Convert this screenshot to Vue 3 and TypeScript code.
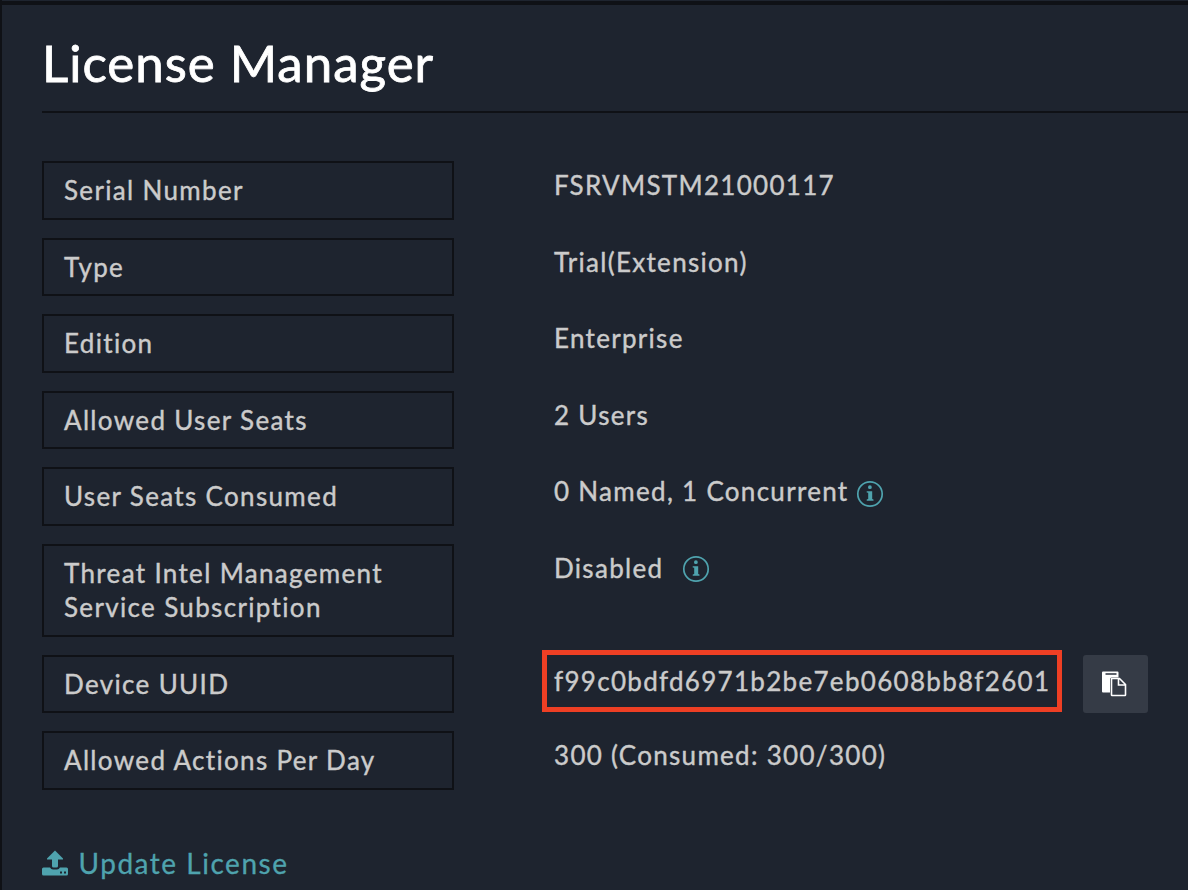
<script setup lang="ts">
interface LicenseRow {
  label: string
  value: string
  info?: 'near' | 'far'
  copy?: boolean
}

const rows: LicenseRow[] = [
  { label: 'Serial Number', value: 'FSRVMSTM21000117' },
  { label: 'Type', value: 'Trial(Extension)' },
  { label: 'Edition', value: 'Enterprise' },
  { label: 'Allowed User Seats', value: '2 Users' },
  { label: 'User Seats Consumed', value: '0 Named, 1 Concurrent', info: 'near' },
  { label: 'Threat Intel Management Service Subscription', value: 'Disabled', info: 'far' },
  { label: 'Device UUID', value: 'f99c0bdfd6971b2be7eb0608bb8f2601', copy: true },
  { label: 'Allowed Actions Per Day', value: '300 (Consumed: 300/300)' },
]
</script>

<template>
  <main class="panel">
    <header class="head">
      <h1>License Manager</h1>
    </header>
    <dl class="rows">
      <div v-for="row in rows" :key="row.label" class="row">
        <dt class="label">{{ row.label }}</dt>
        <dd class="value" :class="{ device: row.copy }">
          <span class="text" :class="{ marked: row.copy }">{{ row.value }}</span>
          <svg v-if="row.info" class="info" :class="row.info" viewBox="0 0 28 28">
            <circle cx="14" cy="14" r="12.2" />
            <path d="M12 7.200a1.900 1.900 0 1 1 3.800 0a1.900 1.900 0 1 1-3.800 0zM10.700 11.200h5.500v7.900l1.300.4v1.200h-6.800v-1.200l1.500-.4v-6.300l-1.500-.4z" />
          </svg>
          <button v-if="row.copy" class="copy" type="button" aria-label="Copy">
            <svg viewBox="0 0 26 26">
              <path class="board" d="M2 .5h14.500q1 0 1 1v5h-7q-1.500 0-1.500 1.500V21.500H2q-1 0-1-1V1.500q0-1 1-1z" />
              <path class="clip" d="M4.500 3h11" />
              <path class="sheet" d="M10.500 7.500H18.500L24.500 13.500V24q0 .5-.5.500H11q-.5 0-.5-.5zM17.500 7.500v6.500h7" />
            </svg>
          </button>
        </dd>
      </div>
    </dl>
    <a class="update">
      <svg viewBox="0 0 26 26">
        <path fill-rule="evenodd" d="M13 .5L21 8.500V9.500H16V16q0 1.500-1.500 1.500h-3Q10 17.500 10 16V9.500H5V8.500zM1.500 17.500H8q1 2 3 2h4q2 0 3-2h6.500q1.500 0 1.500 1.500v5q0 1.500-1.500 1.500h-23Q0 25.500 0 24v-5q0-1.500 1.500-1.500zM18 21.500v2h2v-2zM22 21.500v2h2v-2z" />
      </svg>
      <span>Update License</span>
    </a>
  </main>
</template>

<style>
body {
  margin: 0;
  background: #1e242f;
  overflow: hidden;
}
</style>

<style scoped>
.panel {
  box-sizing: border-box;
  width: 1188px;
  height: 890px;
  overflow: hidden;
  padding-left: 40px;
  border-left: 2px solid #0f1116;
  background: linear-gradient(#1e242f 0 1px, #0f1116 1px 5px, #1e242f 5px);
  color: #cbcbcb;
  font: 400 26px/34.3px Lato, sans-serif;
  letter-spacing: 1.3px;
}
.head {
  box-sizing: border-box;
  height: 113px;
  padding-top: 32px;
  border-bottom: 2px solid #0f1116;
}
h1 {
  margin: 0;
  color: #fff;
  font-size: 51px;
  font-weight: 400;
  line-height: 62px;
  letter-spacing: 1px;
  -webkit-text-stroke: 0.8px;
}
.rows {
  display: flex;
  flex-direction: column;
  gap: 18px;
  margin: 48.4px 0 0;
  -webkit-text-stroke: 0.4px;
}
.row {
  display: grid;
  grid-template-columns: 412px 1fr;
  column-gap: 100px;
}
.label {
  box-sizing: border-box;
  border: 2px solid #0f1116;
  padding: 10.1px 50px 10.1px 20px;
  letter-spacing: 1.34px;
}
.value {
  display: flex;
  align-items: flex-start;
  height: 34.3px;
  margin: 0;
  padding-top: 7px;
  white-space: nowrap;
}
.device {
  height: 58.5px;
  padding-top: 0;
}
.marked {
  box-sizing: border-box;
  width: 520px;
  height: 62px;
  margin: -5px 21px 0 -12px;
  padding: 9.5px 0 0 7px;
  border: 5px solid #ee3f24;
}
.info {
  width: 28px;
  height: 28px;
  fill: #4fa3ae;
  stroke: none;
}
.info circle {
  fill: none;
  stroke: #4fa3ae;
  stroke-width: 1.7;
}
.near {
  margin: 5.6px 0 0 8px;
}
.far {
  margin: 4px 0 0 19px;
}
.copy {
  display: flex;
  flex: none;
  align-items: center;
  justify-content: center;
  width: 65px;
  height: 58px;
  padding: 1px 3px 0 0;
  border: 0;
  border-radius: 3px;
  background: #353b46;
}
.copy svg {
  width: 26px;
  height: 26px;
}
.board {
  fill: #fff;
}
.clip {
  stroke: #353b46;
  stroke-width: 1.6;
}
.sheet {
  fill: #353b46;
  stroke: #fff;
  stroke-width: 1.6;
}
.update {
  display: flex;
  align-items: center;
  gap: 10.5px;
  margin-top: 56.6px;
  color: #4fa3ae;
  font-size: 28px;
  letter-spacing: 1.52px;
  -webkit-text-stroke: 0.3px;
}
.update svg {
  width: 26px;
  height: 26px;
  fill: currentColor;
  stroke: none;
}
</style>
